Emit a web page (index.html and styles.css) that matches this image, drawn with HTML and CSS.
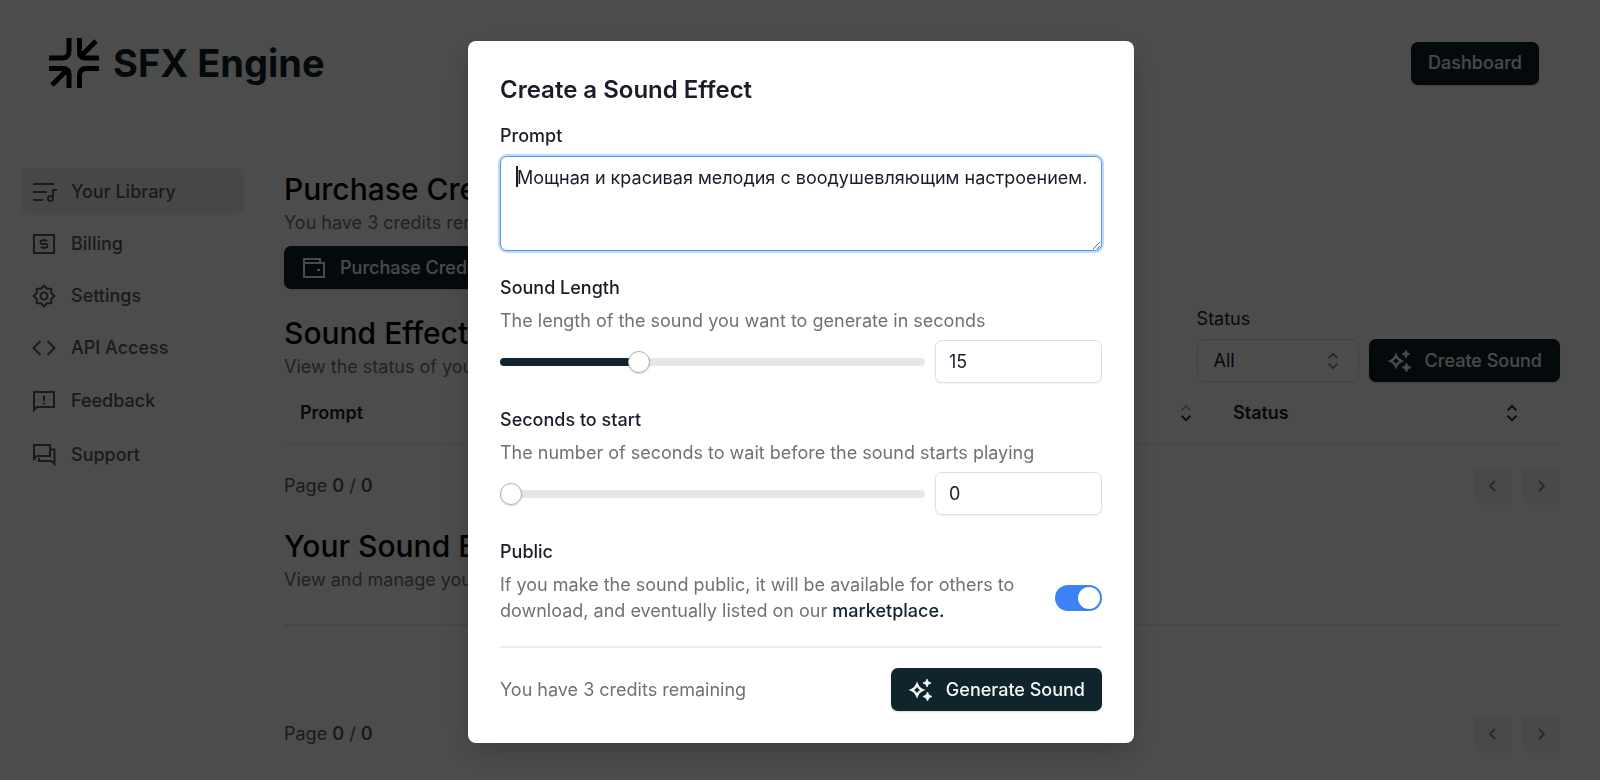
FILE: index.html
```html
<!DOCTYPE html>
<html lang="en">

<head>
    <meta charset="UTF-8">
    <meta name="viewport" content="width=device-width, initial-scale=1.0">
    <title>SFX Engine</title>
    <link rel="stylesheet" href="styles.css">
</head>

<body>
    <!-- Shared icons -->
    <svg class="sprite" aria-hidden="true">
        <symbol id="sparkles" viewBox="0 0 24 24">
            <path d="M9 6.500q1.500 4 5.500 5.500-4 1.500-5.500 5.500-1.500-4-5.500-5.500 4-1.500 5.500-5.500z" fill="none" stroke="currentColor" stroke-width="2.200" />
            <path d="M19 1l1.200 2.800L23 5l-2.800 1.200L19 9l-1.200-2.800L15 5l2.800-1.200zM19.500 14l1.400 3.100 3.100 1.400-3.100 1.400-1.400 3.100-1.400-3.100-3.100-1.400 3.100-1.400z" fill="currentColor" stroke="currentColor" stroke-width="0.800" />
        </symbol>
        <symbol id="prev" viewBox="0 0 18 18">
            <path d="M11 4L6 9l5 5" fill="none" stroke="currentColor" stroke-width="2" />
        </symbol>
        <symbol id="next" viewBox="0 0 18 18">
            <path d="M7 4l5 5-5 5" fill="none" stroke="currentColor" stroke-width="2" />
        </symbol>
    </svg>

    <header class="header">
        <a class="brand" href="#">
            <svg class="logo" viewBox="0 0 50 50" fill="none" stroke="currentColor" stroke-width="5" aria-hidden="true">
                <path d="M20 0v13q0 7-7 7H0M30.500 0v14q0 6 6 6H50M47 3L32 18M0 30.500h14q6 0 6 6V50M3 47l15-15M50 30.500H37.500q-7 0-7 7V50" />
            </svg>
            SFX Engine
        </a>
        <a class="btn" href="#">Dashboard</a>
    </header>

    <div class="layout">
        <nav class="sidebar">
            <div class="nav-group">
                <a class="nav-item active" href="#">
                    <svg class="icon" viewBox="0 0 24 24"><path d="M1 4h21M1 12h14M1 20h10" /><circle cx="18.500" cy="18.500" r="2.500" /><path d="M21 18.500V10h4" /></svg>
                    Your Library
                </a>
                <a class="nav-item" href="#">
                    <svg class="icon" viewBox="0 0 24 24"><path d="M2 3h20v18H2zM15.500 8.500H10q-1.500 0-1.500 1.700T10 12h4q1.500 0 1.500 1.700T14 15.500H8.500M12 6.500v2M12 15.500v2" /></svg>
                    Billing
                </a>
                <a class="nav-item" href="#">
                    <svg class="icon" viewBox="0 0 24 24"><path d="M12 1.500L15 4.700h4.300V9l3.200 3-3.200 3v4.300H15l-3 3.200-3-3.200H4.700V15l-3.200-3 3.200-3V4.700H9z" stroke-linejoin="round" /><circle cx="12" cy="12" r="3.500" /></svg>
                    Settings
                </a>
                <a class="nav-item" href="#">
                    <svg class="icon" viewBox="0 0 24 24"><path d="M8.500 5l-7 7 7 7M15.500 5l7 7-7 7" /></svg>
                    API Access
                </a>
            </div>
            <div class="nav-group">
                <button class="nav-item" type="button">
                    <svg class="icon" viewBox="0 0 24 24"><path d="M2 21V3h20v15H5zM12 6.500v5.500M12 13.500v2" /></svg>
                    Feedback
                </button>
                <button class="nav-item" type="button">
                    <svg class="icon" viewBox="0 0 24 24"><path d="M2 16V2h16v11H5zM19 6.500h3.500V21l-3-3H7V15" /></svg>
                    Support
                </button>
            </div>
        </nav>

        <main class="main">
            <section>
                <h2>Purchase Credits</h2>
                <p class="muted">You have 3 credits remaining</p>
                <button class="btn purchase" type="button">
                    <svg class="icon" viewBox="0 0 24 24"><path d="M2 7V3h16v4M2 7h20v14H2zM15 14h3" /></svg>
                    Purchase Credits
                </button>
            </section>

            <section>
                <div class="section-head">
                    <div class="section-title">
                        <h2>Sound Effects Queue</h2>
                        <p class="muted">View the status of your sound effects</p>
                    </div>
                    <div class="actions">
                        <div class="filter">
                            <label for="status">Status</label>
                            <div class="select">
                                <select id="status" name="status">
                                    <option>All</option>
                                </select>
                                <svg class="sort" viewBox="0 0 18 20"><path d="M4 7l5-5 5 5M4 13l5 5 5-5" /></svg>
                            </div>
                        </div>
                        <button class="btn create" type="button">
                            <svg class="icon"><use href="#sparkles" /></svg>
                            Create Sound
                        </button>
                    </div>
                </div>

                <table class="queue">
                    <thead>
                        <tr>
                            <th scope="col">
                                <div class="th">Prompt <svg class="sort" viewBox="0 0 18 20"><path class="dim" d="M4 7l5-5 5 5" /><path d="M4 13l5 5 5-5" /></svg></div>
                            </th>
                            <th class="col-status" scope="col">
                                <div class="th">Status <svg class="sort" viewBox="0 0 18 20"><path d="M4 7l5-5 5 5M4 13l5 5 5-5" /></svg></div>
                            </th>
                            <td class="col-end"></td>
                        </tr>
                    </thead>
                </table>

                <div class="pager">
                    <span>Page <b>0</b> / <b>0</b></span>
                    <div class="pager-buttons">
                        <button type="button" aria-label="Previous page" disabled><svg><use href="#prev" /></svg></button>
                        <button type="button" aria-label="Next page" disabled><svg><use href="#next" /></svg></button>
                    </div>
                </div>
            </section>

            <section>
                <h2>Your Sound Effects</h2>
                <p class="muted">View and manage your sound effects</p>
                <div class="library"></div>
                <div class="pager">
                    <span>Page <b>0</b> / <b>0</b></span>
                    <div class="pager-buttons">
                        <button type="button" aria-label="Previous page" disabled><svg><use href="#prev" /></svg></button>
                        <button type="button" aria-label="Next page" disabled><svg><use href="#next" /></svg></button>
                    </div>
                </div>
            </section>
        </main>
    </div>

    <!-- Create sound dialog -->
    <div class="overlay">
        <form class="modal" role="dialog" aria-modal="true" aria-labelledby="modalTitle">
            <h3 id="modalTitle">Create a Sound Effect</h3>

            <div class="field">
                <label for="prompt">Prompt</label>
                <textarea id="prompt" name="prompt" spellcheck="false" autofocus>Мощная и красивая мелодия с воодушевляющим настроением.</textarea>
                <span class="caret"></span>
            </div>

            <div class="field">
                <label for="length">Sound Length</label>
                <p class="muted">The length of the sound you want to generate in seconds</p>
                <div class="range-row">
                    <input type="range" id="length" min="1" max="45" value="15" style="--fill: 32%">
                    <input type="text" inputmode="numeric" aria-label="Sound length in seconds" value="15">
                </div>
            </div>

            <div class="field">
                <label for="delay">Seconds to start</label>
                <p class="muted">The number of seconds to wait before the sound starts playing</p>
                <div class="range-row">
                    <input type="range" id="delay" min="0" max="45" value="0" style="--fill: 0%">
                    <input type="text" inputmode="numeric" aria-label="Seconds to start" value="0">
                </div>
            </div>

            <div class="field">
                <label for="public">Public</label>
                <div class="public-row">
                    <p class="muted">If you make the sound public, it will be available for others to download, and eventually listed on our <a href="#">marketplace.</a></p>
                    <input class="switch" type="checkbox" role="switch" id="public" checked>
                </div>
            </div>

            <div class="modal-footer">
                <span class="muted">You have 3 credits remaining</span>
                <button class="btn" type="submit">
                    <svg class="icon"><use href="#sparkles" /></svg>
                    Generate Sound
                </button>
            </div>
        </form>
    </div>
</body>

</html>
```

FILE: styles.css
```css
* {
    box-sizing: border-box;
}

body {
    margin: 0;
    height: 100vh;
    overflow: hidden;
    background: #fff;
    color: #1a1d29;
    font-family: Inter, "Liberation Sans", sans-serif;
    font-size: 18px;
    line-height: 26px;
}

h2,
h3,
p {
    margin: 0;
}

h2 {
    color: #000;
    font-size: 30px;
    font-weight: 500;
    line-height: 36px;
    margin-bottom: 3px;
}

button,
input,
select,
textarea {
    font: inherit;
    color: inherit;
}

a {
    color: inherit;
    text-decoration: none;
}

.sprite {
    display: none;
}

.muted {
    color: #6f7273;
}

.icon {
    width: 24px;
    height: 24px;
    flex: none;
    overflow: visible;
    fill: none;
    stroke: currentColor;
    stroke-width: 2;
}

.icon use {
    stroke: none;
}

.btn {
    display: inline-flex;
    align-items: center;
    gap: 14px;
    height: 43px;
    padding: 0 17px;
    border: none;
    border-radius: 7px;
    background: #10242b;
    color: #f5f7f7;
    font-weight: 500;
    white-space: nowrap;
    cursor: pointer;
    box-shadow: 0 1px 2px rgba(0, 0, 0, 0.15);
}

/* Header */
.header {
    display: flex;
    align-items: center;
    justify-content: space-between;
    height: 126px;
    padding: 0 61px 0 49px;
}

.brand {
    display: flex;
    align-items: center;
    gap: 14px;
    color: #10242b;
    font-size: 38px;
    font-weight: 700;
}

.logo {
    width: 50px;
    height: 50px;
    color: #000;
}

/* Sidebar */
.layout {
    display: flex;
    gap: 40px;
    padding: 42px 40px 0 21px;
}

.sidebar {
    display: flex;
    flex-direction: column;
    gap: 5px;
    width: 223px;
    flex: none;
}

.nav-group {
    display: flex;
    flex-direction: column;
    gap: 5px;
}

.nav-item {
    display: flex;
    align-items: center;
    gap: 15px;
    width: 100%;
    height: 47px;
    padding: 0 11px;
    border: none;
    border-radius: 8px;
    background: none;
    color: #555a5c;
    font-weight: 500;
    cursor: pointer;
}

button.nav-item {
    height: 49px;
}

.nav-item.active {
    background: #efefef;
}

/* Main */
.main {
    display: flex;
    flex-direction: column;
    gap: 17px;
    flex: 1;
    min-width: 0;
    padding-top: 3px;
}

.purchase {
    margin-top: 10px;
    padding: 0 18px;
}

.section-head,
.actions,
.pager,
.pager-buttons {
    display: flex;
}

.section-head {
    align-items: flex-end;
    justify-content: space-between;
}

.section-title {
    padding-bottom: 2px;
}

.actions {
    align-items: flex-end;
    gap: 10px;
}

.create {
    padding: 0 18px;
}

.filter {
    display: flex;
    flex-direction: column;
    gap: 7px;
}

.select {
    position: relative;
}

.select select {
    display: block;
    width: 162px;
    height: 43px;
    padding: 0 16px;
    border: 1px solid #dcdcdf;
    border-radius: 7px;
    background: #fff;
    appearance: none;
}

.select .sort {
    position: absolute;
    top: 13px;
    right: 17px;
    color: #888;
    pointer-events: none;
}

.sort {
    width: 18px;
    height: 18px;
    fill: none;
    stroke: currentColor;
    stroke-width: 2;
}

.sort .dim {
    opacity: 0.4;
}

.queue {
    width: 100%;
    border-collapse: collapse;
    table-layout: fixed;
}

.queue th,
.queue td {
    height: 62px;
    padding: 0 22px 0 16px;
    border-bottom: 1px solid #eaeaea;
    font-weight: 600;
}

.queue .col-status {
    width: 326px;
}

.queue .col-end {
    width: 17px;
    padding: 0;
}

.th {
    display: flex;
    align-items: center;
    justify-content: space-between;
}

.pager {
    align-items: center;
    justify-content: space-between;
    padding: 22px 0 6px;
    color: #555a5c;
}

.pager b {
    font-weight: 600;
}

.pager-buttons {
    gap: 10px;
}

.pager-buttons button {
    display: flex;
    align-items: center;
    justify-content: center;
    width: 38px;
    height: 38px;
    padding: 0;
    border: none;
    border-radius: 7px;
    background: #f5f5f5;
    color: #8a8d8f;
}

.pager-buttons svg {
    width: 18px;
    height: 18px;
}

.library {
    height: 69px;
    margin-top: 31px;
    border-top: 2px solid #e8e8e8;
}

/* Dialog */
.overlay {
    position: fixed;
    inset: 0;
    display: flex;
    align-items: flex-start;
    justify-content: center;
    padding: 41px 16px 0 18px;
    overflow: auto;
    background: rgba(0, 0, 0, 0.7);
}

.modal {
    display: flex;
    flex-direction: column;
    gap: 24px;
    width: 100%;
    max-width: 666px;
    padding: 32px;
    border-radius: 8px;
    background: #fff;
    box-shadow: 0 10px 30px rgba(0, 0, 0, 0.2);
}

.modal h3 {
    font-size: 24px;
    font-weight: 600;
    line-height: 34px;
    margin-bottom: -8px;
}

.field {
    position: relative;
    display: flex;
    flex-direction: column;
    gap: 7px;
}

.field label {
    align-self: flex-start;
    font-weight: 500;
}

.modal textarea {
    display: block;
    width: 100%;
    height: 95px;
    padding: 8px 8px 8px 16px;
    border: 1px solid #5b93e8;
    border-radius: 7px;
    outline: none;
    box-shadow: 0 0 0 2px #bfdbfe;
    caret-color: transparent;
    resize: vertical;
}

.caret {
    position: absolute;
    top: 43px;
    left: 16px;
    width: 2px;
    height: 21px;
    background: #1a1d29;
}

.range-row {
    display: flex;
    align-items: center;
    gap: 10px;
    margin-top: -1px;
}

.range-row input[type="text"] {
    width: 167px;
    height: 43px;
    padding: 0 13px;
    border: 1px solid #dfdfe3;
    border-radius: 7px;
    background: #fff;
    box-shadow: 0 1px 2px rgba(0, 0, 0, 0.05);
}

input[type="range"] {
    flex: 1;
    min-width: 0;
    height: 22px;
    margin: 0;
    background: none;
    appearance: none;
}

input[type="range"]::-webkit-slider-runnable-track {
    height: 8px;
    border-radius: 4px;
    background: linear-gradient(to right, #10242b var(--fill), #e5e7e9 var(--fill));
}

input[type="range"]::-webkit-slider-thumb {
    width: 22px;
    height: 22px;
    margin-top: -7px;
    border: 1px solid #b0b2b5;
    border-radius: 50%;
    background: #fff;
    box-shadow: 0 1px 2px rgba(0, 0, 0, 0.15);
    appearance: none;
}

.public-row {
    display: flex;
    align-items: center;
    justify-content: space-between;
    gap: 32px;
}

.public-row a {
    color: #10242b;
    font-weight: 500;
}

.switch {
    display: flex;
    align-items: center;
    width: 47px;
    height: 26px;
    margin: 0;
    padding: 2px;
    border-radius: 13px;
    background: #d4d4d8;
    flex: none;
    appearance: none;
    cursor: pointer;
}

.switch::before {
    content: "";
    width: 22px;
    height: 22px;
    border-radius: 50%;
    background: #fff;
}

.switch:checked {
    justify-content: flex-end;
    background: #3b82f6;
}

.modal-footer {
    display: flex;
    align-items: center;
    justify-content: space-between;
    margin-top: -2px;
    padding-top: 20px;
    border-top: 2px solid #ececee;
}
```
